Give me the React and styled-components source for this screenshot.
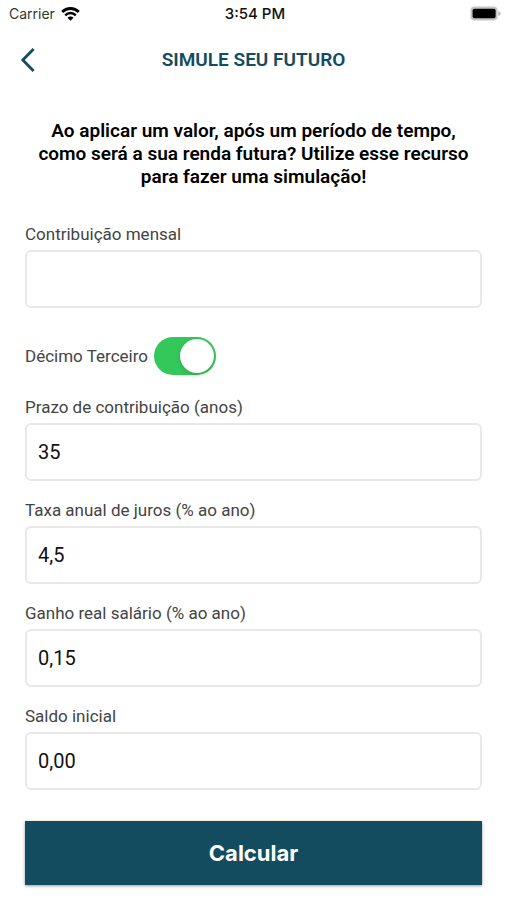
import React, { useState } from 'react'
import styled, { createGlobalStyle } from 'styled-components';


function App() {
  const [mensal, setMensal] = useState('')
  const [decimo, setDecimo] = useState(true)
  const [prazo, setPrazo] = useState('35')
  const [taxa, setTaxa] = useState('4,5')
  const [ganho, setGanho] = useState('0,15')
  const [saldo, setSaldo] = useState('0,00')

  return (
    <>
        <GlobalStyle />
        <StatusBar>
            <Carrier>
                Carrier
                <svg width='19' height='14' viewBox='0 0 19 14' aria-hidden='true'>
                    <path d='M1.2 5 A11.6 11.6 0 0 1 17.8 5' fill='none' stroke='#000' strokeWidth='2.8' />
                    <path d='M4.2 8.3 A7.4 7.4 0 0 1 14.8 8.3' fill='none' stroke='#000' strokeWidth='2.4' />
                    <path d='M9.5 13.8 L6.5 10.8 A4.2 4.2 0 0 1 12.5 10.8 Z' fill='#000' />
                </svg>
            </Carrier>
            <Clock>3:54 PM</Clock>
            <Battery>
                <svg width='31' height='15' viewBox='0 0 31 15' aria-hidden='true'>
                    <rect x='0.5' y='0.5' width='27' height='14' rx='4' fill='#c4c4c4' />
                    <rect x='2.6' y='2.8' width='23' height='9.4' rx='1.6' fill='#000' />
                    <path d='M28.4 5 Q30.6 5.8 30.6 7.5 Q30.6 9.2 28.4 10 Z' fill='#b4b4b4' />
                </svg>
            </Battery>
        </StatusBar>
        <Header>
            <BackButton type='button' aria-label='Voltar'>
                <svg width='16' height='24' viewBox='0 0 16 24' aria-hidden='true'>
                    <path d='M13.6 1 L2.8 12 L13.6 23' fill='none' stroke='#134b5f' strokeWidth='2.8' />
                </svg>
            </BackButton>
            <Title>SIMULE SEU FUTURO</Title>
        </Header>
        <Form onSubmit={(e) => e.preventDefault()}>
            <Intro>
                Ao aplicar um valor, após um período de tempo, como será a sua renda futura? Utilize esse recurso para fazer uma simulação!
            </Intro>
            <Field>
                <Label htmlFor='mensal'>Contribuição mensal</Label>
                <Input id='mensal' value={mensal} onChange={(e) => setMensal(e.target.value)} />
            </Field>
            <SwitchRow>
                <Label htmlFor='decimo'>Décimo Terceiro</Label>
                <Switch id='decimo' type='checkbox' checked={decimo} onChange={(e) => setDecimo(e.target.checked)} />
            </SwitchRow>
            <Field>
                <Label htmlFor='prazo'>Prazo de contribuição (anos)</Label>
                <Input id='prazo' value={prazo} onChange={(e) => setPrazo(e.target.value)} />
            </Field>
            <Field>
                <Label htmlFor='taxa'>Taxa anual de juros (% ao ano)</Label>
                <Input id='taxa' value={taxa} onChange={(e) => setTaxa(e.target.value)} />
            </Field>
            <Field>
                <Label htmlFor='ganho'>Ganho real salário (% ao ano)</Label>
                <Input id='ganho' value={ganho} onChange={(e) => setGanho(e.target.value)} />
            </Field>
            <Field>
                <Label htmlFor='saldo'>Saldo inicial</Label>
                <Input id='saldo' value={saldo} onChange={(e) => setSaldo(e.target.value)} />
            </Field>
            <Submit type='submit'>Calcular</Submit>
        </Form>
    </>
  )
}

export default App

const GlobalStyle = createGlobalStyle`
    * {
        box-sizing: border-box;
    }
    body {
        margin: 0;
        background-color: #fff;
        color: #111;
        font-family: Roboto, sans-serif;
    }
    svg {
        display: block;
    }
`
const StatusBar = styled.div`
    display: grid;
    grid-template-columns: 1fr auto 1fr;
    align-items: center;
    height: 27px;
    padding: 0 6px 0 9px;
    font-family: Inter, sans-serif;
    color: #111;
`
const Carrier = styled.div`
    display: flex;
    align-items: center;
    gap: 6px;
    font-size: 14px;
    color: #333;
`
const Clock = styled.div`
    font-size: 15px;
    font-weight: 500;
`
const Battery = styled.div`
    justify-self: end;
`
const Header = styled.header`
    display: grid;
    grid-template-columns: 48px 1fr 48px;
    align-items: center;
    height: 66px;
`
const BackButton = styled.button`
    justify-self: end;
    padding: 4px 12px;
    border: none;
    background: none;
    cursor: pointer;
`
const Title = styled.h1`
    margin: 0;
    text-align: center;
    font-size: 19px;
    line-height: 24px;
    font-weight: 600;
    color: #134b5f;
`
const Form = styled.form`
    display: flex;
    flex-direction: column;
    padding: 26px 25px 14px;
`
const Intro = styled.p`
    margin: 0 0 36px;
    text-align: center;
    font-size: 19px;
    line-height: 23px;
    font-weight: 600;
    color: #000;
`
const Field = styled.div`
    display: flex;
    flex-direction: column;
    gap: 6px;
    margin-bottom: 19px;
`
const Label = styled.label`
    font-size: 17px;
    line-height: 20px;
    color: #444;
`
const Input = styled.input`
    width: 100%;
    height: 58px;
    padding: 0 11px;
    border: 2px solid #e8e8e8;
    border-radius: 6px;
    background-color: #fff;
    color: #111;
    font-family: inherit;
    font-size: 20px;
`
const SwitchRow = styled.div`
    display: flex;
    align-items: center;
    gap: 6px;
    margin: 10px 0 22px;
`
const Switch = styled.input`
    appearance: none;
    display: flex;
    align-items: center;
    justify-content: ${({ checked }) => (checked ? 'flex-end' : 'flex-start')};
    width: 62px;
    height: 38px;
    margin: 0;
    padding: 2px;
    border-radius: 19px;
    background-color: ${({ checked }) => (checked ? '#34c759' : '#e5e5ea')};
    cursor: pointer;
    &::before {
        content: '';
        width: 34px;
        height: 34px;
        border-radius: 50%;
        background-color: #fff;
        box-shadow: 0 2px 5px rgba(0, 0, 0, 0.15);
    }
`
const Submit = styled.button`
    height: 64px;
    margin-top: 12px;
    border: none;
    background-color: #134b5f;
    color: #fff;
    font-family: Inter, sans-serif;
    font-size: 22px;
    font-weight: 700;
    box-shadow: 0 1px 3px rgba(0, 0, 0, 0.4);
    cursor: pointer;
`
